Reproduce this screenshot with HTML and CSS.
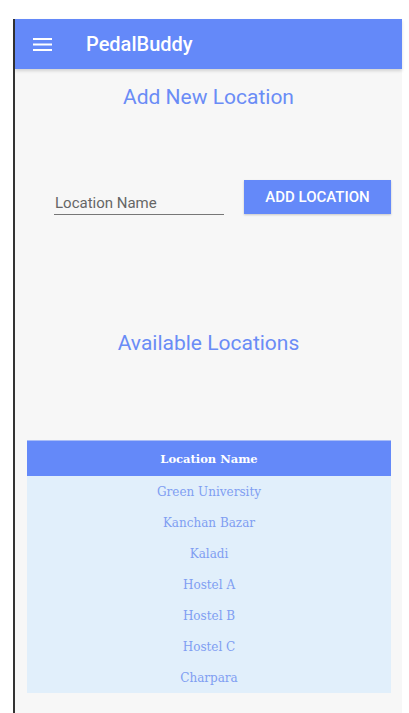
FILE: index.html
```html
<!DOCTYPE html>
<html>
<head>
<meta charset="utf-8">
<link rel="stylesheet" href="styles.css">
</head>
<body>
<div class="frame">
  <header class="appbar">
    <svg class="menu" width="20" height="14" viewBox="0 0 20 14"><rect x="0" y="0" width="19" height="2" fill="#fff"/><rect x="0" y="5.5" width="19" height="2" fill="#fff"/><rect x="0" y="11" width="19" height="2" fill="#fff"/></svg>
    <span class="title">PedalBuddy</span>
  </header>
  <main class="content">
    <h2 class="heading first">Add New Location</h2>
    <div class="form-row">
      <div class="field"><span class="placeholder">Location Name</span></div>
      <button class="btn">ADD LOCATION</button>
    </div>
    <h2 class="heading second">Available Locations</h2>
    <table class="table">
      <thead><tr><th>Location Name</th></tr></thead>
      <tbody>
        <tr><td>Green University</td></tr>
        <tr><td>Kanchan Bazar</td></tr>
        <tr><td>Kaladi</td></tr>
        <tr><td>Hostel A</td></tr>
        <tr><td>Hostel B</td></tr>
        <tr><td>Hostel C</td></tr>
        <tr><td>Charpara</td></tr>
      </tbody>
    </table>
  </main>
</div>
</body>
</html>
```
FILE: styles.css
```css
html, body { margin: 0; padding: 0; background: #fff; }
body { font-family: Roboto, "Noto Sans", sans-serif; }
.frame {
  margin-left: 13px;
  margin-top: 19px;
  width: 387px;
  min-height: 694px;
  border-left: 2px solid #333;
  background: #f7f7f7;
}
.appbar {
  height: 50px;
  background: #6489f9;
  display: flex;
  align-items: center;
  box-shadow: 0 2px 3px rgba(0,0,0,0.15);
  position: relative;
}
.menu { margin-left: 18px; margin-top: 1px; }
.title { color: #fff; font-size: 20px; font-weight: 500; margin-left: 33px; }
.content { display: flex; flex-direction: column; align-items: center; }
.heading {
  margin: 0;
  font-weight: 400;
  font-size: 21px;
  line-height: 24px;
  color: #6a8cf6;
  text-align: center;
}
.heading.first { margin-top: 16px; }
.form-row {
  align-self: stretch;
  display: flex;
  align-items: flex-start;
  margin-top: 71px;
  padding-left: 39px;
}
.field {
  width: 170px;
  height: 35px;
  border-bottom: 1px solid #777;
  display: flex;
  align-items: flex-end;
  box-sizing: border-box;
  padding-bottom: 2px;
}
.placeholder { color: #666; font-size: 15px; padding-left: 1px; }
.btn {
  margin-left: 20px;
  width: 147px;
  height: 34px;
  border: 0;
  background: #6489f9;
  color: #fff;
  font-family: Roboto, sans-serif;
  font-weight: 500;
  font-size: 15px;
  box-shadow: 0 1px 2px rgba(0,0,0,0.2);
  padding: 0;
}
.heading.second { margin-top: 116px; }
.table {
  margin-top: 85px;
  width: 364px;
  align-self: flex-start;
  margin-left: 12px;
  border-collapse: collapse;
  font-family: "DejaVu Serif", serif;
  font-size: 12px;
}
.table th {
  background: #6489f9;
  color: #fff;
  font-weight: 700;
  font-size: 11.5px;
  height: 35px;
  padding: 0;
  border-top: 1px solid #a9bdf7;
}
.table td {
  background: #e1effb;
  color: #7f9ef2;
  text-align: center;
  height: 31px;
  padding: 0;
}
```
